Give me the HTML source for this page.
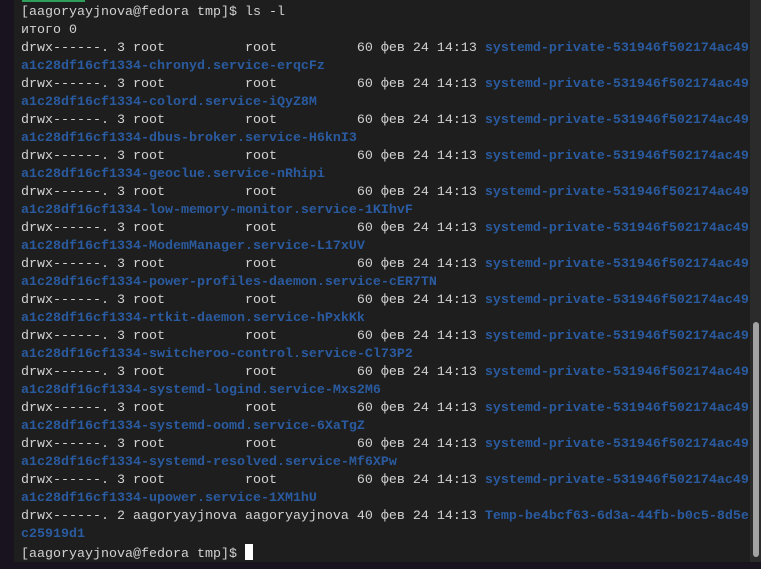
<!DOCTYPE html>
<html><head><meta charset="utf-8"><style>
html,body{margin:0;padding:0;width:761px;height:569px;overflow:hidden;background:#18131f;}
#term{position:absolute;left:14px;top:0;width:736px;height:562px;background:#1e1e1e;}
#sb{position:absolute;left:750px;top:0;width:11px;height:562px;background:#2b2b2b;}
#thumb{position:absolute;left:753px;top:322px;width:6px;height:235px;background:#a3a3a3;border-radius:3px;}
#green{position:absolute;left:22px;top:0;width:63px;height:2px;background:#2e9e5b;}
pre{position:absolute;left:21px;top:4px;margin:0;font-family:"Liberation Mono",monospace;font-size:13.33px;line-height:18px;color:#d2d2d2;white-space:pre;}
b{color:#2a5ba0;font-weight:bold;}
.c{display:inline-block;width:8px;height:16px;background:#fff;vertical-align:-3px;}
</style></head><body>
<div id="term"></div><div id="sb"></div><div id="thumb"></div><div id="green"></div>
<pre>[aagoryayjnova@fedora tmp]$ ls -l
итого 0
drwx------. 3 root          root          60 фев 24 14:13 <b>systemd-private-531946f502174ac49</b>
<b>a1c28df16cf1334-chronyd.service-erqcFz</b>
drwx------. 3 root          root          60 фев 24 14:13 <b>systemd-private-531946f502174ac49</b>
<b>a1c28df16cf1334-colord.service-iQyZ8M</b>
drwx------. 3 root          root          60 фев 24 14:13 <b>systemd-private-531946f502174ac49</b>
<b>a1c28df16cf1334-dbus-broker.service-H6knI3</b>
drwx------. 3 root          root          60 фев 24 14:13 <b>systemd-private-531946f502174ac49</b>
<b>a1c28df16cf1334-geoclue.service-nRhipi</b>
drwx------. 3 root          root          60 фев 24 14:13 <b>systemd-private-531946f502174ac49</b>
<b>a1c28df16cf1334-low-memory-monitor.service-1KIhvF</b>
drwx------. 3 root          root          60 фев 24 14:13 <b>systemd-private-531946f502174ac49</b>
<b>a1c28df16cf1334-ModemManager.service-L17xUV</b>
drwx------. 3 root          root          60 фев 24 14:13 <b>systemd-private-531946f502174ac49</b>
<b>a1c28df16cf1334-power-profiles-daemon.service-cER7TN</b>
drwx------. 3 root          root          60 фев 24 14:13 <b>systemd-private-531946f502174ac49</b>
<b>a1c28df16cf1334-rtkit-daemon.service-hPxkKk</b>
drwx------. 3 root          root          60 фев 24 14:13 <b>systemd-private-531946f502174ac49</b>
<b>a1c28df16cf1334-switcheroo-control.service-Cl73P2</b>
drwx------. 3 root          root          60 фев 24 14:13 <b>systemd-private-531946f502174ac49</b>
<b>a1c28df16cf1334-systemd-logind.service-Mxs2M6</b>
drwx------. 3 root          root          60 фев 24 14:13 <b>systemd-private-531946f502174ac49</b>
<b>a1c28df16cf1334-systemd-oomd.service-6XaTgZ</b>
drwx------. 3 root          root          60 фев 24 14:13 <b>systemd-private-531946f502174ac49</b>
<b>a1c28df16cf1334-systemd-resolved.service-Mf6XPw</b>
drwx------. 3 root          root          60 фев 24 14:13 <b>systemd-private-531946f502174ac49</b>
<b>a1c28df16cf1334-upower.service-1XM1hU</b>
drwx------. 2 aagoryayjnova aagoryayjnova 40 фев 24 14:13 <b>Temp-be4bcf63-6d3a-44fb-b0c5-8d5e</b>
<b>c25919d1</b>
[aagoryayjnova@fedora tmp]$ <span class="c"></span></pre>
</body></html>
